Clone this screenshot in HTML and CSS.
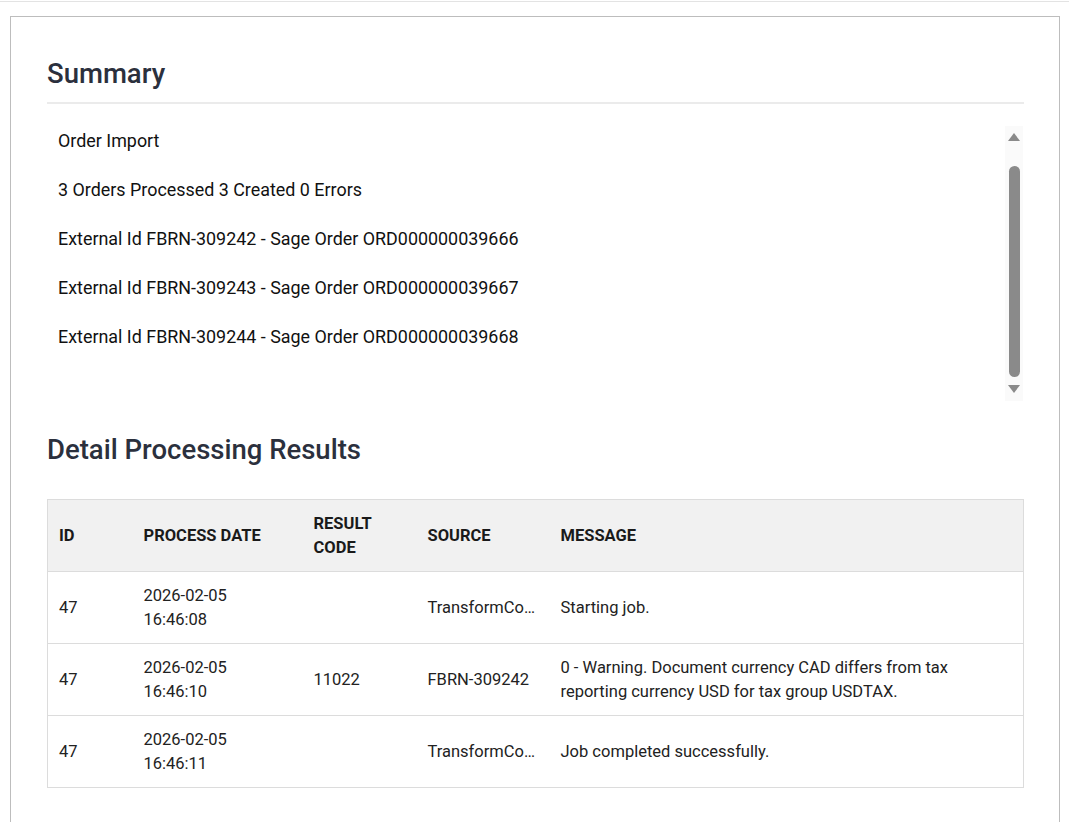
FILE: index.html
```html
<!DOCTYPE html>
<html>
  <head>
    <title>Job Results</title>
    <link rel="stylesheet" href="styles.css">
  </head>

  <body>
    <div class="topbar"></div>
    <div class="page">
      <div class="card">
        <h2 class="section-title summary-title">Summary</h2>

        <div class="summary-box">
          <ul class="summary-list">
            <li>Order Import</li>
            <li>3 Orders Processed 3 Created 0 Errors</li>
            <li>External Id FBRN-309242 - Sage Order ORD000000039666</li>
            <li>External Id FBRN-309243 - Sage Order ORD000000039667</li>
            <li>External Id FBRN-309244 - Sage Order ORD000000039668</li>
          </ul>
          <div class="scrollbar">
            <span class="scroll-up"></span>
            <span class="scroll-thumb"></span>
            <span class="scroll-down"></span>
          </div>
        </div>

        <h2 class="section-title">Detail Processing Results</h2>

        <table class="results">
          <colgroup>
            <col style="width: 85px">
            <col style="width: 170px">
            <col style="width: 114px">
            <col style="width: 133px">
            <col>
          </colgroup>
          <thead>
            <tr>
              <th>ID</th>
              <th>Process Date</th>
              <th>Result Code</th>
              <th>Source</th>
              <th>Message</th>
            </tr>
          </thead>
          <tbody>
            <tr>
              <td>47</td>
              <td>2026-02-05<br>16:46:08</td>
              <td></td>
              <td class="source" title="TransformConnector">TransformConnector</td>
              <td>Starting job.</td>
            </tr>
            <tr>
              <td>47</td>
              <td>2026-02-05<br>16:46:10</td>
              <td>11022</td>
              <td class="source">FBRN-309242</td>
              <td>0 - Warning. Document currency CAD differs from tax reporting currency USD for tax group USDTAX.</td>
            </tr>
            <tr>
              <td>47</td>
              <td>2026-02-05<br>16:46:11</td>
              <td></td>
              <td class="source" title="TransformConnector">TransformConnector</td>
              <td>Job completed successfully.</td>
            </tr>
          </tbody>
        </table>
      </div>
    </div>
  </body>
</html>
```

FILE: styles.css
```css
body {
  font-family: Roboto, "Liberation Sans", sans-serif;
  background-color: #fff;
  color: #111;
  margin: 0;
  padding: 0;
}

.topbar {
  height: 1px;
  border-bottom: 1px solid #e3e3e3;
}

.page {
  padding: 14px 9px 0 10px;
}

.card {
  border: 1px solid #bdbdbd;
  border-bottom: none;
  padding: 40px 35px 60px 36px;
}

.section-title {
  font-size: 27.5px;
  font-weight: 500;
  line-height: 34px;
  color: #2b303d;
  margin: 32px 0 32px;
}

.summary-title {
  margin: 0;
  padding-bottom: 11px;
  border-bottom: 2px solid #ebebeb;
}

/* summary messages with a small scroll track on the right */
.summary-box {
  display: flex;
  height: 275px;
  margin-top: 22px;
}

.summary-list {
  flex: 1;
  list-style: none;
  margin: 0;
  padding: 3px 0 0 11px;
  overflow: hidden;
  font-size: 17.9px;
  color: #111;
}

.summary-list li {
  line-height: 24px;
  margin-bottom: 25px;
}

.scrollbar {
  width: 18px;
  margin-right: 1px;
  background-color: #fafafa;
  display: flex;
  flex-direction: column;
  align-items: center;
}

.scroll-up,
.scroll-down {
  width: 0;
  height: 0;
  border-left: 6px solid transparent;
  border-right: 6px solid transparent;
}

.scroll-up {
  margin-top: 7px;
  border-bottom: 8px solid #8a8a8a;
}

.scroll-thumb {
  width: 11px;
  height: 211px;
  margin-top: 25px;
  border-radius: 6px;
  background-color: #8a8a8a;
}

.scroll-down {
  margin-top: 8px;
  border-top: 8px solid #8a8a8a;
}

/* detail table */
.results {
  width: 100%;
  border-collapse: collapse;
  table-layout: fixed;
  border: 1px solid #dcdcdc;
  font-size: 16.5px;
  color: #222;
}

.results th,
.results td {
  padding: 11.5px 12px 11.5px 11px;
  line-height: 24px;
  text-align: left;
  vertical-align: middle;
  border-bottom: 1px solid #dcdcdc;
}

.results th {
  background-color: #f1f1f1;
  font-weight: bold;
  text-transform: uppercase;
  color: #1a1a1a;
}

.results td.source {
  white-space: nowrap;
  overflow: hidden;
  text-overflow: ellipsis;
}
```
